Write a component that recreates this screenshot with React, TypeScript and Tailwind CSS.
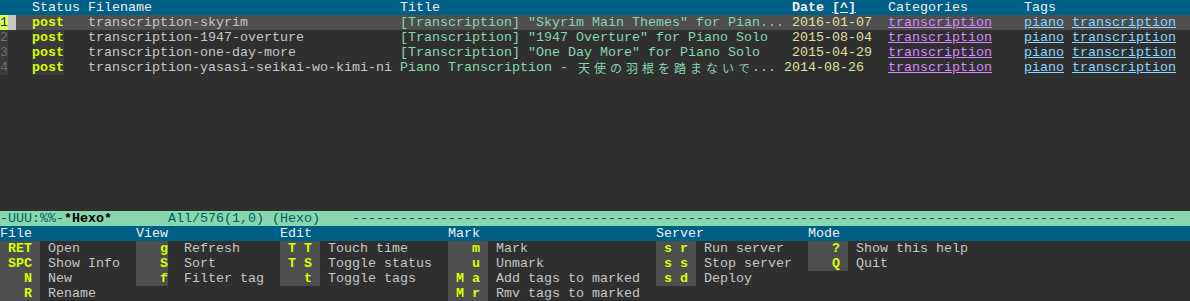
import React from 'react';

type Post = {
  n: string;
  file: string;
  title: string;
  cjk?: string;
  date: string;
};

const posts: Post[] = [
  { n: '1', file: 'transcription-skyrim', title: '[Transcription] "Skyrim Main Themes" for Pian...', date: '2016-01-07' },
  { n: '2', file: 'transcription-1947-overture', title: '[Transcription] "1947 Overture" for Piano Solo', date: '2015-08-04' },
  { n: '3', file: 'transcription-one-day-more', title: '[Transcription] "One Day More" for Piano Solo', date: '2015-04-29' },
  { n: '4', file: 'transcription-yasasi-seikai-wo-kimi-ni', title: 'Piano Transcription - ', cjk: '天使の羽根を踏まないで', date: '2014-08-26' },
];

type Key = { k: string; d: string };
type Group = { name: string; w: string; box: string; pad: string; gap: string; keys: (Key | null)[] };

const groups: Group[] = [
  {
    name: 'File', w: 'w-[136px]', box: 'w-[40px]', pad: 'pr-[8px]', gap: 'ml-[8px]',
    keys: [{ k: 'RET', d: 'Open' }, { k: 'SPC', d: 'Show Info' }, { k: 'N', d: 'New' }, { k: 'R', d: 'Rename' }],
  },
  {
    name: 'View', w: 'w-[144px]', box: 'w-[32px]', pad: 'pr-0', gap: 'ml-[16px]',
    keys: [{ k: 'g', d: 'Refresh' }, { k: 'S', d: 'Sort' }, { k: 'f', d: 'Filter tag' }, null],
  },
  {
    name: 'Edit', w: 'w-[168px]', box: 'w-[40px]', pad: 'pr-[8px]', gap: 'ml-[8px]',
    keys: [{ k: 'T T', d: 'Touch time' }, { k: 'T S', d: 'Toggle status' }, { k: 't', d: 'Toggle tags' }, null],
  },
  {
    name: 'Mark', w: 'w-[208px]', box: 'w-[40px]', pad: 'pr-[8px]', gap: 'ml-[8px]',
    keys: [{ k: 'm', d: 'Mark' }, { k: 'u', d: 'Unmark' }, { k: 'M a', d: 'Add tags to marked' }, { k: 'M r', d: 'Rmv tags to marked' }],
  },
  {
    name: 'Server', w: 'w-[152px]', box: 'w-[40px]', pad: 'pr-[8px]', gap: 'ml-[8px]',
    keys: [{ k: 's r', d: 'Run server' }, { k: 's s', d: 'Stop server' }, { k: 's d', d: 'Deploy' }, null],
  },
  {
    name: 'Mode', w: 'flex-1', box: 'w-[40px]', pad: 'pr-[8px]', gap: 'ml-[8px]',
    keys: [{ k: '?', d: 'Show this help' }, { k: 'Q', d: 'Quit' }, null, null],
  },
];

function PostRow({ p, active }: { p: Post; active: boolean }) {
  return (
    <div className={`flex h-[15px] ${active ? 'bg-[#4e4e4e]' : ''}`}>
      <div className="flex w-[32px]">
        {active ? (
          <>
            <span className="w-[8px] bg-[#d7ff5f] text-[#2f2f2f]">{p.n}</span>
            <span className="w-[8px] bg-[#c6c6c6]" />
          </>
        ) : (
          <span className="w-[8px] bg-[#3a3a3a] text-[#6c6c6c]">{p.n}</span>
        )}
      </div>
      <div className="w-[56px]">
        <span className={`inline-block w-[32px] font-bold text-[#d7ff00] ${active ? '' : 'bg-[#3a3a3a]'}`}>post</span>
      </div>
      <div className="w-[312px] text-[#c6c6c6]">{p.file}</div>
      <div className={`${p.cjk ? 'w-[384px]' : 'w-[392px]'} flex text-[#87d7af]`}>
        <span>{p.title}</span>
        {p.cjk &&
          p.cjk.split('').map((c, i) => (
            <span key={i} className="inline-block w-[16px] text-center font-['Noto_Sans_CJK_JP',sans-serif] text-[12px]">
              {c}
            </span>
          ))}
        {p.cjk && <span>...</span>}
      </div>
      <div className={`${p.cjk ? 'w-[104px]' : 'w-[96px]'} text-[#e0e09c]`}>{p.date}</div>
      <div className="w-[136px]">
        <span className="text-[#d787ff] underline">transcription</span>
      </div>
      <div className="flex-1 text-[#87d7ff]">
        <span className="underline">piano</span> <span className="underline">transcription</span>
      </div>
    </div>
  );
}

export default function App() {
  return (
    <div className="flex h-[301px] w-[1190px] flex-col overflow-hidden bg-[#2f2f2f] font-['Liberation_Mono',monospace] text-[13.33px] leading-[15px] whitespace-pre">
      <div className="flex h-[15px] bg-[#005f87] text-[#eeeeee]">
        <div className="w-[32px]" />
        <div className="w-[56px]">Status</div>
        <div className="w-[312px]">Filename</div>
        <div className="w-[392px]">Title</div>
        <div className="w-[96px] font-bold">
          Date <span className="underline">[^]</span>
        </div>
        <div className="w-[136px]">Categories</div>
        <div className="flex-1">Tags</div>
      </div>
      {posts.map((p, i) => (
        <PostRow key={p.n} p={p} active={i === 0} />
      ))}
      <div className="flex-1" />
      <div className="h-[15px] overflow-hidden bg-[#87d7af] text-[#005f5f]">
        -UUU:%%-<span className="font-bold text-black">*Hexo*</span>
        {'       All/576(1,0) (Hexo)    '}
        {'-'.repeat(103)}
      </div>
      <div className="flex h-[15px] bg-[#005f87] text-[#eeeeee]">
        {groups.map((g) => (
          <div key={g.name} className={g.w}>
            {g.name}
          </div>
        ))}
      </div>
      {[0, 1, 2, 3].map((r) => (
        <div key={r} className="flex h-[15px]">
          {groups.map((g) => {
            const item = g.keys[r];
            return (
              <div key={g.name} className={`flex ${g.w}`}>
                {item && (
                  <>
                    <span className={`${g.box} ${g.pad} bg-[#4e4e4e] text-right font-bold text-[#d7ff00]`}>{item.k}</span>
                    <span className={`${g.gap} text-[#c6c6c6]`}>{item.d}</span>
                  </>
                )}
              </div>
            );
          })}
        </div>
      ))}
    </div>
  );
}
